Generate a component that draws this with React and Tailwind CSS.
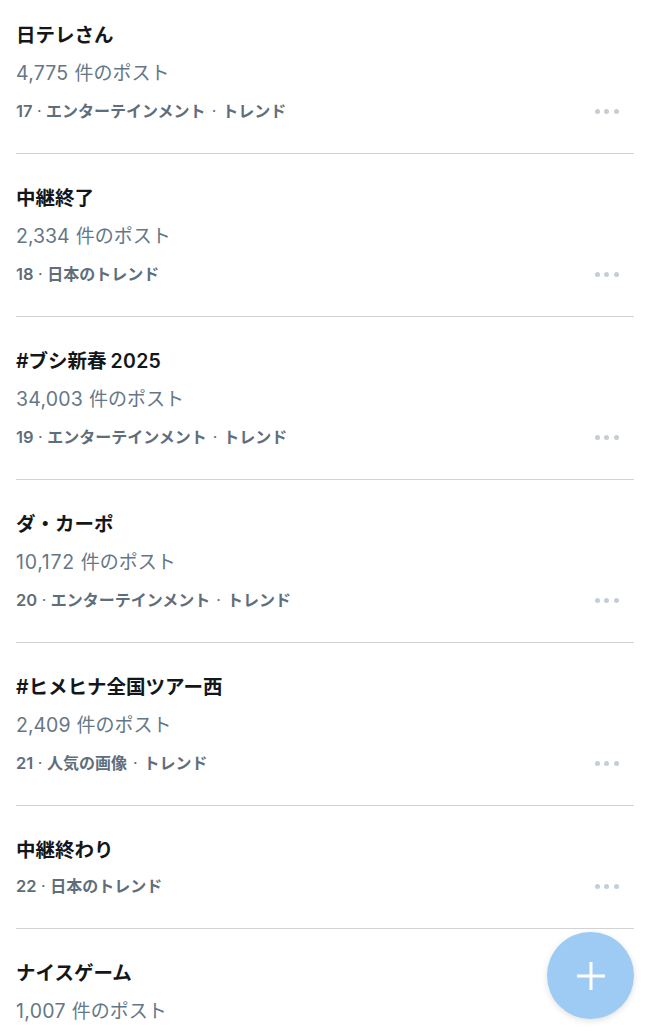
const rows = [
  { title: "日テレさん", posts: "4,775", track: "tracking-[0.2px]", meta: "17", cat: ["エンターテインメント", "トレンド"], first: true },
  { title: "中継終了", posts: "2,334", track: "tracking-[0px]", meta: "18", cat: ["日本のトレンド"] },
  { title: "#ブシ新春", year: "2025", posts: "34,003", track: "tracking-[0.2px]", meta: "19", cat: ["エンターテインメント", "トレンド"] },
  { title: "ダ・カーポ", posts: "10,172", track: "tracking-[0.7px]", meta: "20", cat: ["エンターテインメント", "トレンド"] },
  { title: "#ヒメヒナ全国ツアー西", posts: "2,409", track: "tracking-[0px]", meta: "21", cat: ["人気の画像", "トレンド"] },
  { title: "中継終わり", meta: "22", cat: ["日本のトレンド"], short: true },
];

function Dots() {
  return (
    <div className="flex gap-[4.3px]">
      <span className="w-[5px] h-[5px] rounded-full bg-[#c5ced6]" />
      <span className="w-[5px] h-[5px] rounded-full bg-[#c5ced6]" />
      <span className="w-[5px] h-[5px] rounded-full bg-[#c5ced6]" />
    </div>
  );
}

function Title({ children, year }) {
  return (
    <div className="h-[38px] leading-[39px] text-[19.5px] font-semibold text-[#14171a] whitespace-nowrap">
      {children}
      {year && <span className="ml-[4px] tracking-[0.3px]">{year}</span>}
    </div>
  );
}

function Posts({ value, track }) {
  return (
    <div className="h-[38px] leading-[39px] text-[19px] text-[#657786] whitespace-nowrap">
      <span className={`text-[19.5px] ${track}`}>{value}</span>
      <span className="ml-[6px]">件のポスト</span>
    </div>
  );
}

function Row({ r }) {
  return (
    <div className={`mx-[16px] border-b border-[#cfd3d6] pb-[23px] ${r.first ? "pt-[16px]" : "pt-[25px]"}`}>
      <Title year={r.year}>{r.title}</Title>
      {r.posts && <Posts value={r.posts} track={r.track} />}
      <div className={`flex items-center justify-between pr-[15.5px] h-[38px] ${r.short ? "-mt-[2px]" : ""}`}>
        <div className="flex items-center text-[16px] font-semibold text-[#5f6e7b] whitespace-nowrap">
          <span className="text-[16.5px]">{r.meta}</span>
          {r.cat.map((c, i) => (
            <span key={c} className="flex items-center">
              <span className={`font-normal ${i === 0 ? "mx-[4.5px]" : "mx-[6px]"}`}>·</span>
              {c}
            </span>
          ))}
        </div>
        <Dots />
      </div>
    </div>
  );
}

export default function App() {
  return (
    <div
      className="relative w-[650px] h-[1031px] overflow-hidden bg-white"
      style={{ fontFamily: '"Inter", "Noto Sans CJK JP", sans-serif' }}
    >
      {rows.map((r) => (
        <Row key={r.meta} r={r} />
      ))}
      <div className="mx-[16px] pt-[25px]">
        <Title>ナイスゲーム</Title>
        <Posts value="1,007" track="tracking-[0.3px]" />
      </div>
      <div className="absolute left-[547px] top-[932px] w-[87px] h-[87px] rounded-full bg-[#9dcbf3] shadow-[0_2px_6px_rgba(0,0,0,0.12)] flex items-center justify-center">
        <svg width="30" height="30" viewBox="0 0 30 30" fill="none">
          <path d="M15 1V29M1 15H29" stroke="#ffffff" strokeWidth="3" />
        </svg>
      </div>
    </div>
  );
}
